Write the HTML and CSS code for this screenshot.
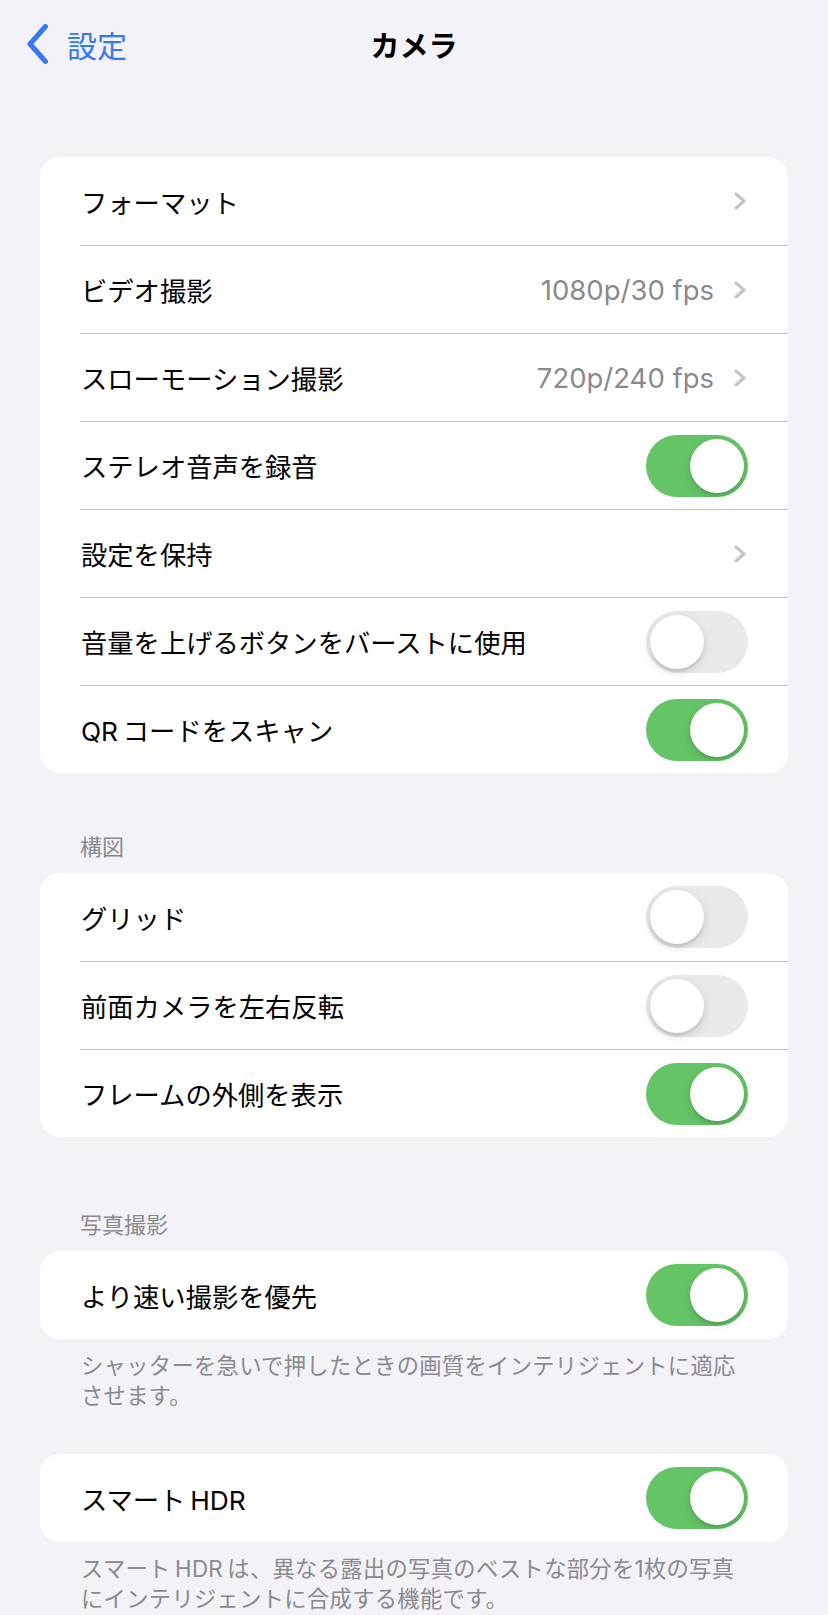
FILE: index.html
```html
<!DOCTYPE html>
<html lang="ja">

<head>
    <meta charset="UTF-8">
    <meta name="viewport" content="width=device-width, initial-scale=1.0">
    <title>カメラ</title>
    <link rel="stylesheet" href="styles.css">
</head>

<body>

    <div class="screen">
        <!-- Navigation bar -->
        <header class="nav-bar">
            <a class="back-link" href="#">
                <svg class="back-icon" width="24" height="40" viewBox="0 0 24 40">
                    <path d="M20.5 2.5 L5 20 L20.5 37.5" fill="none" stroke="currentColor" stroke-width="5" stroke-linecap="round" stroke-linejoin="round" />
                </svg>
                <span>設定</span>
            </a>
            <h1 class="nav-title">カメラ</h1>
            <div></div>
        </header>

        <!-- General camera settings -->
        <section class="group group-top">
            <ul class="list">
                <li class="row">
                    <span class="row-label">フォーマット</span>
                    <span class="chevron"><svg width="14" height="18" viewBox="0 0 14 18"><path d="M3 2 L11 9 L3 16" /></svg></span>
                </li>
                <li class="row">
                    <span class="row-label">ビデオ撮影</span>
                    <span class="row-value">1080p/30 fps</span>
                    <span class="chevron"><svg width="14" height="18" viewBox="0 0 14 18"><path d="M3 2 L11 9 L3 16" /></svg></span>
                </li>
                <li class="row">
                    <span class="row-label">スローモーション撮影</span>
                    <span class="row-value">720p/240 fps</span>
                    <span class="chevron"><svg width="14" height="18" viewBox="0 0 14 18"><path d="M3 2 L11 9 L3 16" /></svg></span>
                </li>
                <li class="row">
                    <span class="row-label">ステレオ音声を録音</span>
                    <span class="switch on"><span class="knob"></span></span>
                </li>
                <li class="row">
                    <span class="row-label">設定を保持</span>
                    <span class="chevron"><svg width="14" height="18" viewBox="0 0 14 18"><path d="M3 2 L11 9 L3 16" /></svg></span>
                </li>
                <li class="row">
                    <span class="row-label">音量を上げるボタンをバーストに使用</span>
                    <span class="switch"><span class="knob"></span></span>
                </li>
                <li class="row">
                    <span class="row-label">QR&#8201;コードをスキャン</span>
                    <span class="switch on"><span class="knob"></span></span>
                </li>
            </ul>
        </section>

        <!-- Composition -->
        <section class="group group-composition">
            <h2 class="group-header">構図</h2>
            <ul class="list">
                <li class="row">
                    <span class="row-label">グリッド</span>
                    <span class="switch"><span class="knob"></span></span>
                </li>
                <li class="row">
                    <span class="row-label">前面カメラを左右反転</span>
                    <span class="switch"><span class="knob"></span></span>
                </li>
                <li class="row">
                    <span class="row-label">フレームの外側を表示</span>
                    <span class="switch on"><span class="knob"></span></span>
                </li>
            </ul>
        </section>

        <!-- Photo capture -->
        <section class="group group-photo">
            <h2 class="group-header">写真撮影</h2>
            <ul class="list">
                <li class="row">
                    <span class="row-label">より速い撮影を優先</span>
                    <span class="switch on"><span class="knob"></span></span>
                </li>
            </ul>
            <p class="group-footer">シャッターを急いで押したときの画質をインテリジェントに適応させます。</p>
        </section>

        <section class="group group-hdr">
            <ul class="list">
                <li class="row">
                    <span class="row-label">スマート&#8201;HDR</span>
                    <span class="switch on"><span class="knob"></span></span>
                </li>
            </ul>
            <p class="group-footer">スマート&#8201;HDR&#8201;は、異なる露出の写真のベストな部分を1枚の写真にインテリジェントに合成する機能です。</p>
        </section>
    </div>

</body>

</html>
```

FILE: styles.css
```css
body {
    font-family: 'Inter', 'Noto Sans CJK JP', sans-serif;
    background-color: #F2F2F7;
    color: #000;
    margin: 0;
    padding: 0;
}

.screen {
    width: 828px;
    min-height: 1615px;
    overflow: hidden;
}

/* Navigation bar */
.nav-bar {
    display: grid;
    grid-template-columns: 1fr auto 1fr;
    align-items: center;
    height: 88px;
}

.back-link {
    display: flex;
    align-items: center;
    padding-left: 25px;
    color: #3478F6;
    text-decoration: none;
    font-size: 30px;
}

.back-icon {
    display: block;
    margin-right: 18px;
}

.nav-title {
    margin: 0;
    font-size: 29px;
    font-weight: 700;
}

/* Grouped lists */
.group-top {
    margin-top: 69px;
}

.group-composition {
    margin-top: 59px;
}

.group-photo {
    margin-top: 73px;
}

.group-hdr {
    margin-top: 43px;
}

.group-header {
    margin: 0 0 11px;
    padding-left: 80px;
    font-size: 22px;
    font-weight: 400;
    line-height: 30px;
    color: #8A8A8E;
}

.group-footer {
    margin: 0;
    padding: 12px 0 0 81px;
    width: 664px;
    font-size: 22.3px;
    letter-spacing: 0.3px;
    line-height: 30px;
    color: #8A8A8E;
}

.list {
    list-style: none;
    margin: 0 40px;
    padding: 0;
    background-color: #fff;
    border-radius: 20px;
    overflow: hidden;
}

.row {
    display: flex;
    align-items: center;
    box-sizing: border-box;
    height: 88px;
    margin-left: 40px;
    padding-right: 40px;
    font-size: 26.3px;
}

.row + .row {
    border-top: 1px solid #C6C6C8;
}

.row-label {
    flex: 1;
    padding-left: 1px;
}

.row-value {
    margin-right: 19px;
    font-size: 27.5px;
    color: #8A8A8E;
}

.chevron svg {
    display: block;
    margin-right: 1px;
}

.chevron path {
    fill: none;
    stroke: #C4C4C7;
    stroke-width: 3;
    stroke-linecap: round;
    stroke-linejoin: round;
}

/* Toggle switch */
.switch {
    display: flex;
    align-items: center;
    box-sizing: border-box;
    width: 102px;
    height: 62px;
    padding: 4px;
    border-radius: 31px;
    background-color: #E9E9EB;
}

.switch.on {
    justify-content: flex-end;
    background-color: #65C466;
}

.knob {
    width: 54px;
    height: 54px;
    border-radius: 50%;
    background-color: #fff;
    box-shadow: 0 3px 8px rgba(0, 0, 0, 0.15), 0 3px 1px rgba(0, 0, 0, 0.06);
}
```
